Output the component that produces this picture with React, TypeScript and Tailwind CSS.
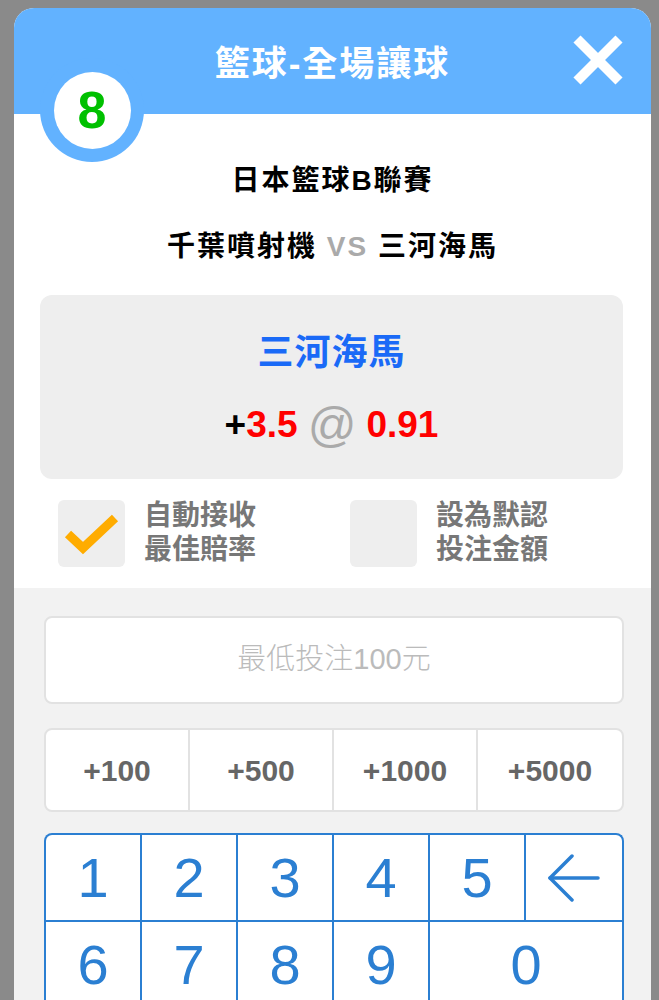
import React from 'react'

const quick = ['+100', '+500', '+1000', '+5000']

function CloseIcon() {
  return (
    <svg width="50" height="50" viewBox="0 0 50 50">
      <line x1="4" y1="4" x2="46" y2="46" stroke="white" strokeWidth="10" />
      <line x1="46" y1="4" x2="4" y2="46" stroke="white" strokeWidth="10" />
    </svg>
  )
}

function BackIcon() {
  return (
    <svg width="54" height="48" viewBox="0 0 54 48" fill="none" stroke="#2b7fd2" strokeWidth="3.5" strokeLinecap="round" strokeLinejoin="round">
      <polyline points="25,2 3,24 25,46" />
      <line x1="3" y1="24" x2="51" y2="24" />
    </svg>
  )
}

function CheckBox({ checked, lines }: { checked: boolean; lines: string[] }) {
  return (
    <div className="flex items-center gap-[19px]">
      <div className="w-[67px] h-[67px] rounded-[6px] bg-[#eeeeee] flex items-center justify-center">
        {checked && (
          <svg width="67" height="67" viewBox="0 0 67 67" fill="none">
            <polyline points="10,34 25,48 57,18" stroke="#ffac00" strokeWidth="9" />
          </svg>
        )}
      </div>
      <div className="text-[28px] leading-[34px] text-[#777777] font-bold">
        {lines.map((l) => (
          <div key={l}>{l}</div>
        ))}
      </div>
    </div>
  )
}

export default function App() {
  return (
    <div className="min-h-screen bg-[#8a8a8a] pt-2 pl-[14px] pr-[8px] font-[Liberation_Sans,Noto_Sans_CJK_TC,sans-serif]">
      <div className="relative bg-white rounded-t-[20px] overflow-hidden">
        {/* header */}
        <div className="relative h-[106px] bg-[#62b2ff] flex items-center justify-center">
          <h1 className="text-white font-bold text-[35px] tracking-[2px] leading-none pt-1">籃球-全場讓球</h1>
          <div className="absolute right-[28px] top-[27px]">
            <CloseIcon />
          </div>
        </div>
        {/* number badge */}
        <div className="absolute left-[26px] top-[50px] w-[104px] h-[104px] rounded-full bg-[#62b2ff] flex items-center justify-center">
          <div className="w-[77px] h-[77px] rounded-full bg-white flex items-center justify-center">
            <span className="text-[#00c000] font-bold text-[52px] leading-none">8</span>
          </div>
        </div>

        {/* match info */}
        <div className="pb-[21px]">
          <div className="mt-[47px] h-[40px] leading-[40px] text-center text-[28px] font-bold text-black tracking-[2px]">
            日本籃球B聯賽
          </div>
          <div className="mt-[26px] h-[40px] leading-[40px] text-center text-[28px] font-bold text-black tracking-[2px]">
            千葉噴射機 <span className="text-[#aaaaaa]">VS</span> 三河海馬
          </div>
          <div className="mt-[28px] ml-[26px] mr-[28px] h-[184px] rounded-[12px] bg-[#eeeeee] flex flex-col items-center">
            <div className="mt-[34px] h-[48px] leading-[48px] text-[36px] font-bold text-[#1a6af7] tracking-[1px]">三河海馬</div>
            <div className="mt-[24px] h-[48px] flex items-center font-bold text-[37px]">
              <span className="text-black">+</span>
              <span className="text-[#ff0000]">3.5</span>
              <span className="text-[#aaaaaa] text-[48px] font-normal mx-[10px] leading-none">@</span>
              <span className="text-[#ff0000]">0.91</span>
            </div>
          </div>
          <div className="mt-[20px] flex pl-[44px]">
            <div className="w-[292px]">
              <CheckBox checked lines={['自動接收', '最佳賠率']} />
            </div>
            <CheckBox checked={false} lines={['設為默認', '投注金額']} />
          </div>
        </div>

        {/* stake area */}
        <div className="bg-[#f2f2f2] pt-[28px] pl-[30px] pr-[27px] pb-10">
          <div className="h-[88px] rounded-[8px] bg-white border-2 border-[#e2e2e2] flex items-center justify-center text-[29px] text-[#bbbbbb] font-light">
            最低投注100元
          </div>
          <div className="mt-[24px] h-[84px] rounded-[8px] bg-white border-2 border-[#e2e2e2] grid grid-cols-4">
            {quick.map((q, i) => (
              <div
                key={q}
                className={`flex items-center justify-center text-[30px] font-bold text-[#666666] ${i < 3 ? 'border-r-2 border-[#e2e2e2]' : ''}`}
              >
                {q}
              </div>
            ))}
          </div>
          <div className="mt-[21px] rounded-t-[8px] bg-white border-2 border-b-0 border-[#2b7fd2] grid grid-cols-6 text-[#2b7fd2] text-[56px]">
            {['1', '2', '3', '4', '5'].map((d) => (
              <div key={d} className="h-[87px] flex items-center justify-center border-r-2 border-b-2 border-[#2b7fd2]">
                {d}
              </div>
            ))}
            <div className="h-[87px] flex items-center justify-center border-b-2 border-[#2b7fd2]">
              <BackIcon />
            </div>
            {['6', '7', '8', '9'].map((d) => (
              <div key={d} className="h-[87px] flex items-center justify-center border-r-2 border-b-2 border-[#2b7fd2]">
                {d}
              </div>
            ))}
            <div className="col-span-2 h-[87px] flex items-center justify-center border-b-2 border-[#2b7fd2]">0</div>
          </div>
        </div>
      </div>
    </div>
  )
}
